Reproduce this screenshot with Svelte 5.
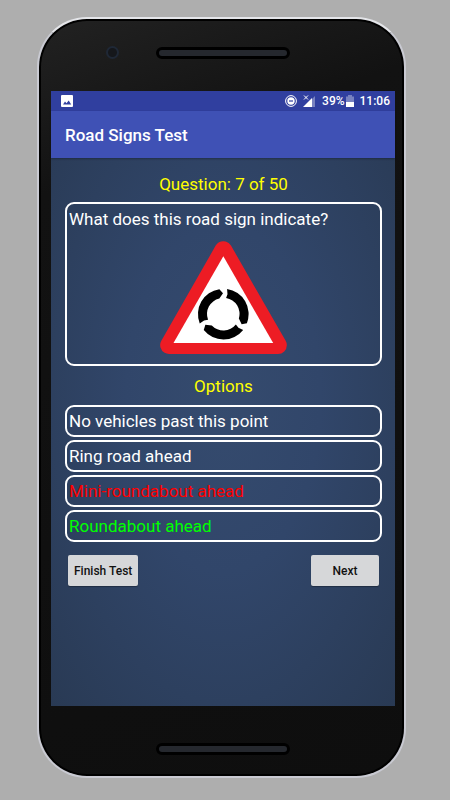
<script lang="ts">
  type Result = "neutral" | "wrong" | "right";

  const question = {
    number: 7,
    total: 50,
    text: "What does this road sign indicate?",
  };

  const options: { label: string; result: Result }[] = [
    { label: "No vehicles past this point", result: "neutral" },
    { label: "Ring road ahead", result: "neutral" },
    { label: "Mini-roundabout ahead", result: "wrong" },
    { label: "Roundabout ahead", result: "right" },
  ];

  const arrowAngles = [0, 120, 240];
</script>

<main class="page">
  <div class="phone">
    <div class="bezel bezel-top">
      <span class="camera"></span>
      <span class="speaker"></span>
    </div>

    <div class="screen">
      <div class="status-bar">
        <svg class="icon-picture" viewBox="0 0 12 12" aria-hidden="true">
          <rect width="12" height="12" rx="1" fill="#fff" />
          <path d="M2 9.5L4 6.6L5.5 8.3L7.7 5.6L10.2 9.5Z" fill="#303f9f" />
        </svg>

        <div class="status-right">
          <svg class="icon-dnd" viewBox="0 0 12 12" aria-hidden="true">
            <circle cx="6" cy="6" r="5.4" fill="none" stroke="#fff" stroke-width="1" />
            <circle cx="6" cy="6" r="3.7" fill="#fff" />
            <path d="M4 6H8" stroke="#303f9f" stroke-width="1.2" />
          </svg>
          <svg class="icon-signal" viewBox="0 0 12 12" aria-hidden="true">
            <path d="M12 1V12H1Z" fill="#fff" opacity="0.35" />
            <path d="M9 3V12H0Z" fill="#fff" />
            <path d="M1 .5L5 4.5M5 .5L1 4.5" stroke="#fff" stroke-width="1" />
          </svg>
          <span class="battery-level">39%</span>
          <svg class="icon-battery" viewBox="0 0 8 12" aria-hidden="true">
            <path d="M0 1.5H2V0H6V1.5H8V7H0Z" fill="#fff" opacity="0.35" />
            <path d="M0 7H8V12H0Z" fill="#fff" />
          </svg>
          <span class="clock">11:06</span>
        </div>
      </div>

      <header class="app-bar">
        <h1>Road Signs Test</h1>
      </header>

      <div class="content">
        <h2>Question: {question.number} of {question.total}</h2>

        <section class="question">
          <p>{question.text}</p>
          <svg class="sign" viewBox="30 32 381 340" role="img" aria-label="Road sign">
            <path
              d="M220 59L56.500 345.500H384.500Z"
              fill="#ed1c24"
              stroke="#ed1c24"
              stroke-width="53"
              stroke-linejoin="round"
            />
            <path d="M220 78L70 339H370Z" fill="#fff" />
            {#each arrowAngles as angle}
              <path
                d="M149 280A76 76 0 0 1 208 177L219 189L208 205A48 48 0 0 0 174 269L162 271Z"
                transform="rotate({angle} 220 252)"
                fill="#000"
              />
            {/each}
          </svg>
        </section>

        <h2>Options</h2>

        <div class="options">
          {#each options as option}
            <button class={["option", option.result]}>{option.label}</button>
          {/each}
        </div>

        <div class="actions">
          <button class="action">Finish Test</button>
          <button class="action">Next</button>
        </div>
      </div>
    </div>

    <div class="bezel bezel-bottom">
      <span class="speaker"></span>
    </div>
  </div>
</main>

<style>
  :global(body) {
    margin: 0;
    background: #aeaeae;
  }

  .page {
    box-sizing: border-box;
    min-height: 100vh;
    padding: 17px 44px 22px 37px;
    display: flex;
    font-family: Roboto, sans-serif;
  }

  .phone {
    flex: 1;
    display: flex;
    flex-direction: column;
    padding: 0 9px 0 12px;
    border: 2px solid #c9cad2;
    border-top-color: #e4e5e9;
    border-radius: 50px;
    background: linear-gradient(160deg, #222 0%, #121212 20%, #0e0e0e 100%);
    box-shadow: inset 0 0 0 2px #000;
  }

  .bezel {
    display: grid;
    grid-template-columns: 1fr 134px 1fr;
    align-items: center;
  }

  .bezel-top {
    height: 67px;
    padding-bottom: 5px;
  }

  .bezel-bottom {
    height: 70px;
    padding-top: 0;
    padding-bottom: 0;
  }

  .bezel-bottom .speaker {
    margin-top: 16px;
  }

  .camera {
    justify-self: center;
    box-sizing: border-box;
    width: 13px;
    height: 13px;
    margin-left: 17px;
    border: 2px solid #1f2836;
    border-radius: 50%;
    background: #15171b;
  }

  .speaker {
    grid-column: 2;
    box-sizing: border-box;
    height: 12px;
    border: 3px solid #000;
    border-radius: 6px;
    background: #25282e;
  }

  .screen {
    flex: 1;
    display: flex;
    flex-direction: column;
    background: radial-gradient(ellipse at center, #354b6e 0%, #31466a 40%, #293a54 100%);
  }

  .status-bar {
    height: 20px;
    padding: 0 5px 0 10px;
    display: flex;
    align-items: center;
    justify-content: space-between;
    background: #303f9f;
    color: #fff;
    font-size: 12px;
    font-weight: 500;
  }

  .status-right {
    display: flex;
    align-items: center;
  }

  .icon-picture,
  .icon-dnd,
  .icon-signal {
    width: 12px;
    height: 12px;
  }

  .icon-signal {
    margin: 0 7px 0 6px;
  }

  .icon-battery {
    width: 8px;
    height: 12px;
    margin: 0 6px 0 1px;
  }

  .app-bar {
    height: 47px;
    padding: 0 14px;
    display: flex;
    align-items: center;
    background: #3f51b5;
    box-shadow: 0 1px 2px rgba(0, 0, 0, 0.3);
  }

  h1 {
    margin: 0;
    color: #fff;
    font-size: 17px;
    font-weight: 500;
  }

  .content {
    flex: 1;
    padding: 15px 13px 15px 14px;
  }

  h2 {
    margin: 0;
    color: #ff0;
    font-size: 17px;
    font-weight: 400;
    line-height: 22px;
    text-align: center;
  }

  .question {
    margin: 7px 0 9px;
    padding: 4px 2px 10px;
    border: 2px solid #fff;
    border-radius: 9px;
  }

  .question p {
    margin: 0 0 11px;
    color: #fff;
    font-size: 17px;
    line-height: 22px;
  }

  .sign {
    display: block;
    width: 127px;
    height: 113px;
    margin: 0 auto;
  }

  .options {
    margin-top: 8px;
    display: flex;
    flex-direction: column;
    gap: 3px;
  }

  .option {
    height: 32px;
    padding: 0 2px;
    border: 2px solid #fff;
    border-radius: 9px;
    background: none;
    color: #fff;
    font-family: inherit;
    font-size: 17px;
    text-align: left;
    cursor: pointer;
  }

  .wrong {
    color: #f00;
  }

  .right {
    color: #0f0;
  }

  .actions {
    margin-top: 13px;
    padding: 0 3px;
    display: flex;
    justify-content: space-between;
  }

  .action {
    min-width: 68px;
    height: 31px;
    padding: 0 6px;
    border: 0;
    border-radius: 2px;
    background: #d6d7d9;
    box-shadow: 0 1px 1px rgba(0, 0, 0, 0.3);
    color: #111;
    font-family: inherit;
    font-size: 12px;
    font-weight: 500;
    cursor: pointer;
  }
</style>
